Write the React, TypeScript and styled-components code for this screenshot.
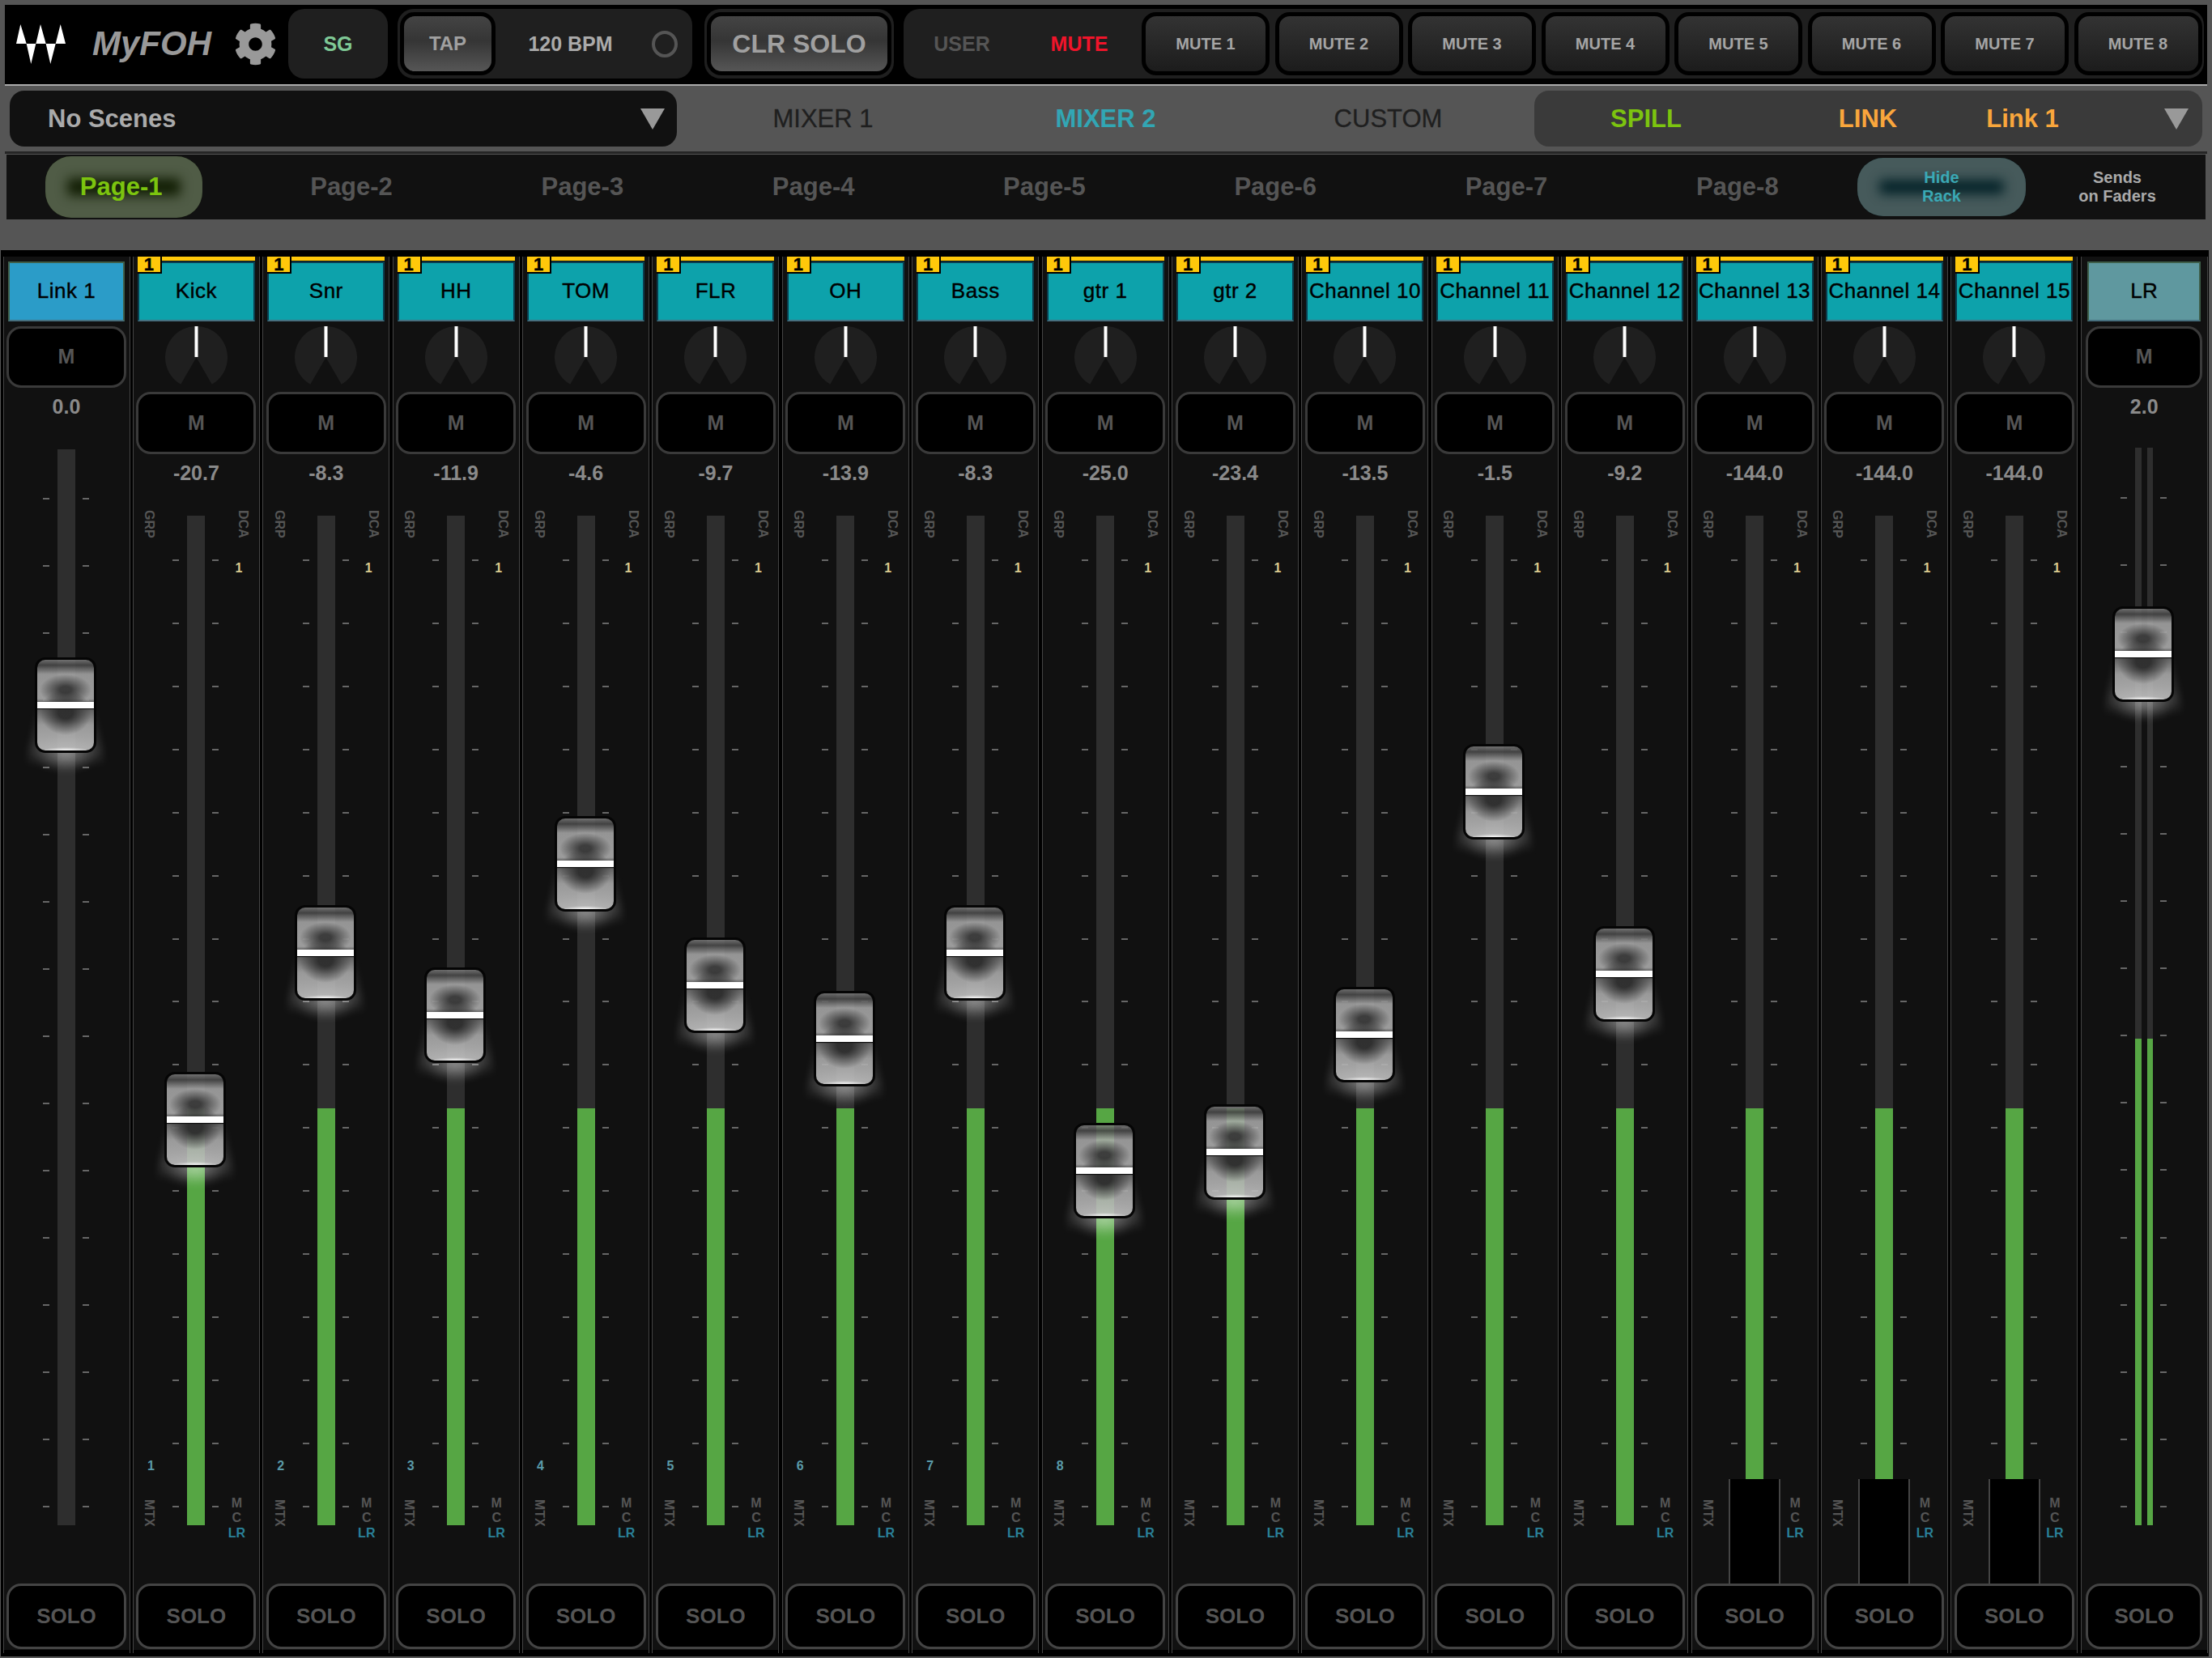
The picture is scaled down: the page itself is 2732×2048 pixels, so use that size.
import React from "react";
import styled, { createGlobalStyle } from "styled-components";
import { FaCog } from "react-icons/fa";

const GlobalStyle = createGlobalStyle`
  html, body {
    margin: 0;
    padding: 0;
    background: #555;
  }
  * {
    box-sizing: border-box;
  }
`;

const Page = styled.div`
  width: 2732px;
  height: 2048px;
  overflow: hidden;
  background: #555;
  font-family: "Liberation Sans", Arial, sans-serif;
  padding-top: 6px;
`;

/* ---------- top bar ---------- */

const TopBar = styled.div`
  display: flex;
  align-items: center;
  width: 2720px;
  height: 100px;
  margin: 0 6px;
  padding: 0 4px 2px 14px;
  background: #000;
  border-bottom: 2px solid #aaa;
`;

const LogoMark = styled.svg`
  width: 61px;
  height: 49px;
  flex: none;
`;

const AppTitle = styled.div`
  margin-left: 33px;
  width: 145px;
  font-size: 42px;
  font-weight: bold;
  font-style: italic;
  color: #999;
  white-space: nowrap;
`;

const GearSlot = styled.div`
  display: flex;
  margin-left: 30px;
  color: #999;
  font-size: 53px;
`;

const Panel = styled.div<{ $ml: number; $width: number }>`
  display: flex;
  align-items: center;
  flex: none;
  margin-left: ${(p) => p.$ml}px;
  width: ${(p) => p.$width}px;
  height: 86px;
  background: #1f1f1f;
  border-radius: 20px;
`;

const PanelText = styled.div<{ $color: string; $width?: number }>`
  flex: none;
  width: ${(p) => (p.$width ? `${p.$width}px` : "100%")};
  text-align: center;
  font-size: 25px;
  font-weight: bold;
  color: ${(p) => p.$color};
`;

const GlossButton = styled.div<{ $size: number; $width: number; $ml: number }>`
  display: flex;
  align-items: center;
  justify-content: center;
  flex: none;
  width: ${(p) => p.$width}px;
  height: 78px;
  margin-left: ${(p) => p.$ml}px;
  border: 5px solid #000;
  border-radius: 18px;
  background: linear-gradient(#444 0%, #353535 45%, #565656 100%);
  font-size: ${(p) => p.$size}px;
  font-weight: bold;
  color: #a0a0a0;
`;

const BeatLamp = styled.div`
  width: 32px;
  height: 33px;
  margin-left: 8px;
  border: 4px solid #555;
  border-radius: 50%;
`;

const MuteRow = styled.div`
  display: flex;
  flex: none;
  margin-left: 4px;
`;

const MuteButton = styled.div`
  display: flex;
  align-items: center;
  justify-content: center;
  flex: none;
  width: 158px;
  height: 78px;
  margin-right: 6.5px;
  border: 5px solid #000;
  border-radius: 18px;
  background: linear-gradient(#333, #1c1c1c);
  font-size: 20px;
  font-weight: bold;
  color: #a5a5a5;
`;

/* ---------- scenes / mixer tabs ---------- */

const SelectorRow = styled.div`
  display: flex;
  width: 2720px;
  height: 84px;
  margin: 0 6px;
  padding: 6px 0 6px 6px;
  border-bottom: 3px solid #262626;
`;

const DropArrow = styled.div`
  width: 0;
  height: 0;
  border-left: 15px solid transparent;
  border-right: 15px solid transparent;
  border-top: 26px solid #999;
`;

const ScenePicker = styled.div`
  display: flex;
  align-items: center;
  justify-content: space-between;
  width: 824px;
  height: 69px;
  padding: 0 15px 0 47px;
  background: #111;
  border-radius: 18px;
  font-size: 31px;
  font-weight: bold;
  color: #aaa;
`;

const MixerTabs = styled.div`
  display: grid;
  grid-template-columns: repeat(3, 349px);
  margin: 0 6px;
`;

const MixerTab = styled.div<{ $active?: boolean }>`
  display: flex;
  align-items: center;
  justify-content: center;
  height: 69px;
  font-size: 31px;
  font-weight: ${(p) => (p.$active ? "bold" : "normal")};
  color: ${(p) => (p.$active ? "#32a6b4" : "#1f1f1f")};
  -webkit-text-stroke: ${(p) => (p.$active ? "0" : "0.3px #1f1f1f")};
`;

const SpillPanel = styled.div`
  display: flex;
  align-items: center;
  width: 825px;
  height: 69px;
  padding-right: 17px;
  background: #3a3a3a;
  border-radius: 18px;
  font-size: 31px;
  font-weight: bold;
`;

const SpillItem = styled.div<{ $width: number; $color: string }>`
  width: ${(p) => p.$width}px;
  text-align: center;
  color: ${(p) => p.$color};
`;

const SpillArrow = styled(DropArrow)`
  margin-left: auto;
`;

/* ---------- page row ---------- */

const PageRow = styled.div`
  display: flex;
  align-items: center;
  width: 2716px;
  height: 80px;
  margin: 1px 8px 0;
  background: #111;
`;

const PageGrid = styled.div`
  display: grid;
  grid-template-columns: 283.4px repeat(7, 285.3px);
  flex: none;
`;

const PageCell = styled.div`
  display: flex;
  align-items: center;
  justify-content: center;
`;

const GlowPill = styled.div<{ $core: string; $rim: string; $width: number; $height: number }>`
  display: flex;
  flex-direction: column;
  align-items: center;
  justify-content: center;
  flex: none;
  width: ${(p) => p.$width}px;
  height: ${(p) => p.$height}px;
  border-radius: 32px;
  background: ${(p) => p.$core};
  box-shadow: inset 0 0 14px 27px ${(p) => p.$rim};
`;

const PagePill = styled(GlowPill)`
  margin-left: 7px;
  padding-right: 7px;
`;

const PageLabel = styled.div<{ $active?: boolean }>`
  font-size: 31px;
  font-weight: bold;
  color: ${(p) => (p.$active ? "#7cc40f" : "#555")};
`;

const SmallCaption = styled.div<{ $color: string }>`
  font-size: 20px;
  line-height: 23px;
  font-weight: bold;
  text-align: center;
  color: ${(p) => p.$color};
`;

const RackSlot = styled.div`
  margin-left: 5.5px;
  flex: none;
`;

const SendsSlot = styled.div`
  flex: 1;
  padding-left: 4px;
`;

/* ---------- mixer ---------- */

const Mixer = styled.div`
  display: flex;
  width: 2727px;
  height: 1737px;
  margin: 38px 0 0 1px;
  padding-left: 2.5px;
  background: #000;
  overflow: hidden;
`;

const Strip = styled.div`
  flex: none;
  width: 160.4px;
  padding: 8px 0 4px;
`;

const StripBody = styled.div`
  display: flex;
  flex-direction: column;
  align-items: center;
  width: 157px;
  height: 100%;
  border-left: 1.5px solid #444;
  border-right: 1.5px solid #444;
  background: linear-gradient(#111, #111) no-repeat top / 100% calc(100% - 4px);
`;

const NameLabel = styled.div<{ $color: string; $edge: string; $width: number }>`
  position: relative;
  display: flex;
  align-items: center;
  justify-content: center;
  flex: none;
  width: ${(p) => p.$width}px;
  height: 73.5px;
  margin-top: 6px;
  background: ${(p) => p.$color};
  border: 2px solid ${(p) => p.$edge};
  border-bottom-color: #47707f;
  font-size: 26px;
  letter-spacing: 0.5px;
  white-space: nowrap;
  color: #000;
  -webkit-text-stroke: 0.4px #000;
`;

const DcaBar = styled.div`
  position: absolute;
  top: -8px;
  left: -2px;
  right: -2px;
  height: 5px;
  background: #ffc80a;
`;

const DcaTab = styled.div`
  position: absolute;
  top: -8px;
  left: -2px;
  display: flex;
  align-items: center;
  justify-content: center;
  width: 30px;
  height: 21px;
  background: #ffc80a;
  border-right: 2px solid #000;
  border-bottom: 2px solid #000;
  font-size: 22px;
  line-height: 1;
  letter-spacing: 0;
  font-weight: bold;
  color: #000;
`;

const PanKnob = styled.svg`
  flex: none;
  width: 77px;
  height: 77px;
  margin-top: 6.5px;
`;

const BlackButton = styled.div<{ $width: number; $height: number; $mt: number; $size: number; $line: string }>`
  display: flex;
  align-items: center;
  justify-content: center;
  flex: none;
  width: ${(p) => p.$width}px;
  height: ${(p) => p.$height}px;
  margin-top: ${(p) => p.$mt}px;
  background: #000;
  border: 3.5px solid ${(p) => p.$line};
  border-radius: 18px;
  font-size: ${(p) => p.$size}px;
  font-weight: bold;
  color: #555;
`;

const SoloButton = styled(BlackButton)`
  margin-bottom: 5px;
`;

const LevelValue = styled.div<{ $height: number }>`
  display: flex;
  align-items: center;
  justify-content: center;
  flex: none;
  height: ${(p) => p.$height}px;
  font-size: 25px;
  font-weight: bold;
  color: #8a8a8a;
`;

const FaderArea = styled.div`
  position: relative;
  display: grid;
  grid-template-columns: 48.5px 8px 10px 22px 9px 8px 48.5px;
  flex: 1;
  width: 100%;
  min-height: 0;
`;

const SideLeft = styled.div`
  display: flex;
  flex-direction: column;
  align-items: flex-start;
  padding: 23px 0 70px;
`;

const SideRight = styled.div`
  display: flex;
  flex-direction: column;
  align-items: flex-start;
  grid-column: 7;
  padding: 23px 0 53px;
`;

const VerticalTag = styled.div<{ $ml: number }>`
  margin-left: ${(p) => p.$ml}px;
  writing-mode: vertical-rl;
  font-size: 16px;
  line-height: 18px;
  font-weight: bold;
  color: #555;
`;

const MtxNumber = styled.div`
  margin: auto 0 31px 17px;
  font-size: 16px;
  line-height: 20px;
  font-weight: bold;
  color: #5a9aa8;
`;

const DcaNumber = styled.div`
  margin: 27px 0 0 20px;
  font-size: 16px;
  line-height: 20px;
  font-weight: bold;
  color: #d9c98e;
`;

const BusTags = styled.div`
  display: flex;
  flex-direction: column;
  align-items: center;
  width: 22px;
  margin: auto 0 0 11px;
  font-size: 16px;
  line-height: 18.5px;
  font-weight: bold;
  color: #555;
`;

const BusActive = styled.span`
  color: #2a8199;
`;

const TickColumn = styled.div<{ $col: number; $top: number }>`
  display: flex;
  flex-direction: column;
  justify-content: space-between;
  grid-column: ${(p) => p.$col};
  grid-row: 1;
  padding: ${(p) => p.$top}px 0 94px;
`;

const Tick = styled.div`
  height: 2px;
  background: #666;
`;

const TrackSlot = styled.div<{ $top: number }>`
  display: flex;
  justify-content: space-between;
  grid-column: 4;
  grid-row: 1;
  padding: ${(p) => p.$top}px 0 72px;
`;

const Track = styled.div<{ $width: number }>`
  display: flex;
  align-items: flex-end;
  width: ${(p) => p.$width}px;
  background: #2e2e2e;
`;

const TrackFill = styled.div<{ $height: number }>`
  width: 100%;
  height: ${(p) => p.$height}px;
  background: #56a644;
`;

const FaderCap = styled.div<{ $top: number }>`
  position: absolute;
  left: 38.5px;
  top: ${(p) => p.$top}px;
  width: 76px;
  height: 118px;
`;

const CapGlow = styled.div`
  position: absolute;
  left: -12px;
  right: -12px;
  top: 52px;
  height: 90px;
  filter: blur(4px);

  &::before {
    content: "";
    position: absolute;
    inset: 0;
    clip-path: polygon(16% 0, 84% 0, 100% 100%, 0 100%);
    background:
      radial-gradient(ellipse 42% 26% at 50% 74%, rgba(255, 255, 255, 0.42), rgba(255, 255, 255, 0)),
      linear-gradient(rgba(255, 255, 255, 0), rgba(255, 255, 255, 0.13) 68%, rgba(255, 255, 255, 0) 92%);
  }
`;

const CapBody = styled.div`
  position: relative;
  display: flex;
  align-items: center;
  width: 100%;
  height: 100%;
  border: 3.5px solid #050505;
  border-radius: 13px;
  background:
    radial-gradient(ellipse 30px 4px at 50% 100%, rgba(255, 255, 255, 0.95), rgba(255, 255, 255, 0)),
    radial-gradient(ellipse 32px 28px at 50% 58%, rgba(46, 46, 46, 0.97) 28%, rgba(46, 46, 46, 0)),
    radial-gradient(ellipse 32px 19px at 50% 33%, rgba(56, 56, 56, 0.95) 22%, rgba(56, 56, 56, 0)),
    linear-gradient(rgba(130, 130, 130, 0.8), rgba(70, 70, 70, 0.92) 6%, rgba(170, 170, 170, 0.86) 16%, rgba(175, 175, 175, 0.88) 43%, rgba(100, 100, 100, 0.9) 47%, rgba(100, 100, 100, 0.9) 53%, rgba(170, 170, 170, 0.88) 72%, rgba(190, 190, 190, 0.88) 100%);
`;

const CapLine = styled.div`
  width: 100%;
  height: 8px;
  background: #fff;
  box-shadow: 0 1px 1px #111;
`;

const ParkedCap = styled.div<{ $top: number }>`
  position: absolute;
  left: 45.5px;
  top: ${(p) => p.$top}px;
  bottom: 0;
  width: 64px;
  background: #000;
  border-left: 2px solid #444;
  border-right: 2px solid #444;
`;

/* ---------- data ---------- */

const CHANNEL_AREA_TOP = 607;
const BUS_AREA_TOP = 526;
const CAP_CENTER = 59;

type Channel = {
  name: string;
  value: string;
  capY?: number;
  mtx?: number;
};

const channels: Channel[] = [
  { name: "Kick", value: "-20.7", capY: 1383, mtx: 1 },
  { name: "Snr", value: "-8.3", capY: 1177, mtx: 2 },
  { name: "HH", value: "-11.9", capY: 1254, mtx: 3 },
  { name: "TOM", value: "-4.6", capY: 1067, mtx: 4 },
  { name: "FLR", value: "-9.7", capY: 1217, mtx: 5 },
  { name: "OH", value: "-13.9", capY: 1283, mtx: 6 },
  { name: "Bass", value: "-8.3", capY: 1177, mtx: 7 },
  { name: "gtr 1", value: "-25.0", capY: 1446, mtx: 8 },
  { name: "gtr 2", value: "-23.4", capY: 1423 },
  { name: "Channel 10", value: "-13.5", capY: 1278 },
  { name: "Channel 11", value: "-1.5", capY: 978 },
  { name: "Channel 12", value: "-9.2", capY: 1203 },
  { name: "Channel 13", value: "-144.0" },
  { name: "Channel 14", value: "-144.0" },
  { name: "Channel 15", value: "-144.0" },
];

const pages = ["Page-1", "Page-2", "Page-3", "Page-4", "Page-5", "Page-6", "Page-7", "Page-8"];
const muteGroups = [1, 2, 3, 4, 5, 6, 7, 8];
const tickRows = Array.from({ length: 16 }, (_, i) => i);

const Ticks = ({ top }: { top: number }) => (
  <>
    {[2, 6].map((col) => (
      <TickColumn key={col} $col={col} $top={top}>
        {tickRows.map((i) => (
          <Tick key={i} />
        ))}
      </TickColumn>
    ))}
  </>
);

const Cap = ({ top }: { top: number }) => (
  <FaderCap $top={top}>
    <CapGlow />
    <CapBody>
      <CapLine />
    </CapBody>
  </FaderCap>
);

const ChannelStrip = ({ channel }: { channel: Channel }) => (
  <Strip>
    <StripBody>
      <NameLabel $color="#0da2ab" $edge="#0b3e4f" $width={145}>
        <DcaBar />
        <DcaTab>1</DcaTab>
        {channel.name}
      </NameLabel>
      <PanKnob viewBox="0 0 77 77">
        <path d="M38.5 38.5 L57.75 71.8 A38.5 38.5 0 1 0 19.25 71.8 Z" fill="#1f1f1f" />
        <rect x="36.5" y="0" width="4" height="38" fill="#fff" />
      </PanKnob>
      <BlackButton $width={148} $height={77} $mt={4} $size={25} $line="#3a3a3a">
        M
      </BlackButton>
      <LevelValue $height={46}>{channel.value}</LevelValue>
      <FaderArea>
        <SideLeft>
          <VerticalTag $ml={10.5}>GRP</VerticalTag>
          <MtxNumber>{channel.mtx ?? "\u00a0"}</MtxNumber>
          <VerticalTag $ml={10.5}>MTX</VerticalTag>
        </SideLeft>
        <Ticks top={84} />
        <TrackSlot $top={30}>
          <Track $width={22}>
            <TrackFill $height={515} />
          </Track>
        </TrackSlot>
        <SideRight>
          <VerticalTag $ml={21}>DCA</VerticalTag>
          <DcaNumber>1</DcaNumber>
          <BusTags>
            <span>M</span>
            <span>C</span>
            <BusActive>LR</BusActive>
          </BusTags>
        </SideRight>
        {channel.capY ? (
          <Cap top={channel.capY - CAP_CENTER - CHANNEL_AREA_TOP} />
        ) : (
          <ParkedCap $top={1827 - CHANNEL_AREA_TOP} />
        )}
      </FaderArea>
      <SoloButton $width={148} $height={81} $mt={0} $size={26} $line="#444">
        SOLO
      </SoloButton>
    </StripBody>
  </Strip>
);

const App = () => {
  return (
    <Page>
      <GlobalStyle />
      <TopBar>
        <LogoMark viewBox="0 0 61 49">
          <path
            d="M0 24 L5.3 0 L12.7 24 L18.3 49 L24.3 24 L30 0 L36.7 24 L42.3 49 L48.7 24 L54.7 0 L61 24 Z"
            fill="#fff"
          />
        </LogoMark>
        <AppTitle>MyFOH</AppTitle>
        <GearSlot>
          <FaCog />
        </GearSlot>
        <Panel $ml={14} $width={123}>
          <PanelText $color="#7fc996">SG</PanelText>
        </Panel>
        <Panel $ml={12} $width={364}>
          <GlossButton $size={24} $width={118} $ml={3}>
            TAP
          </GlossButton>
          <PanelText $color="#aaa" $width={185}>
            120 BPM
          </PanelText>
          <BeatLamp />
        </Panel>
        <Panel $ml={15} $width={234}>
          <GlossButton $size={32} $width={228} $ml={3}>
            CLR SOLO
          </GlossButton>
        </Panel>
        <Panel $ml={12} $width={1606}>
          <PanelText $color="#555" $width={144}>
            USER
          </PanelText>
          <PanelText $color="#f0142a" $width={146}>
            MUTE
          </PanelText>
          <MuteRow>
            {muteGroups.map((n) => (
              <MuteButton key={n}>MUTE {n}</MuteButton>
            ))}
          </MuteRow>
        </Panel>
      </TopBar>

      <SelectorRow>
        <ScenePicker>
          No Scenes
          <DropArrow />
        </ScenePicker>
        <MixerTabs>
          <MixerTab>MIXER 1</MixerTab>
          <MixerTab $active>MIXER 2</MixerTab>
          <MixerTab>CUSTOM</MixerTab>
        </MixerTabs>
        <SpillPanel>
          <SpillItem $width={276} $color="#7cc40f">
            SPILL
          </SpillItem>
          <SpillItem $width={272} $color="#f9a63c">
            LINK
          </SpillItem>
          <SpillItem $width={110} $color="#f9a63c">
            Link 1
          </SpillItem>
          <SpillArrow />
        </SpillPanel>
      </SelectorRow>

      <PageRow>
        <PageGrid>
          {pages.map((page, i) => (
            <PageCell key={page}>
              {i === 0 ? (
                <PagePill $core="#142006" $rim="#505c46" $width={194} $height={76}>
                  <PageLabel $active>{page}</PageLabel>
                </PagePill>
              ) : (
                <PageLabel>{page}</PageLabel>
              )}
            </PageCell>
          ))}
        </PageGrid>
        <RackSlot>
          <GlowPill $core="#06242a" $rim="#465a5b" $width={208} $height={72}>
            <SmallCaption $color="#3aa9b5">
              Hide
              <br />
              Rack
            </SmallCaption>
          </GlowPill>
        </RackSlot>
        <SendsSlot>
          <SmallCaption $color="#aaa">
            Sends
            <br />
            on Faders
          </SmallCaption>
        </SendsSlot>
      </PageRow>

      <Mixer>
        <Strip>
          <StripBody>
            <NameLabel $color="#2b9cc8" $edge="#3f5f4a" $width={144}>
              Link 1
            </NameLabel>
            <BlackButton $width={148} $height={76} $mt={6} $size={25} $line="#3a3a3a">
              M
            </BlackButton>
            <LevelValue $height={48}>0.0</LevelValue>
            <FaderArea>
              <Ticks top={88} />
              <TrackSlot $top={28}>
                <Track $width={22} />
              </TrackSlot>
              <Cap top={870 - CAP_CENTER - BUS_AREA_TOP} />
            </FaderArea>
            <SoloButton $width={148} $height={81} $mt={0} $size={26} $line="#444">
              SOLO
            </SoloButton>
          </StripBody>
        </Strip>

        {channels.map((channel) => (
          <ChannelStrip key={channel.name} channel={channel} />
        ))}

        <Strip>
          <StripBody>
            <NameLabel $color="#5f989f" $edge="#3f5f4a" $width={140}>
              LR
            </NameLabel>
            <BlackButton $width={144} $height={76} $mt={6} $size={25} $line="#3a3a3a">
              M
            </BlackButton>
            <LevelValue $height={48}>2.0</LevelValue>
            <FaderArea>
              <Ticks top={87} />
              <TrackSlot $top={26}>
                <Track $width={7.5}>
                  <TrackFill $height={601} />
                </Track>
                <Track $width={7.5}>
                  <TrackFill $height={601} />
                </Track>
              </TrackSlot>
              <Cap top={807 - CAP_CENTER - BUS_AREA_TOP} />
            </FaderArea>
            <SoloButton $width={144} $height={81} $mt={0} $size={26} $line="#444">
              SOLO
            </SoloButton>
          </StripBody>
        </Strip>
      </Mixer>
    </Page>
  );
};

export default App;
